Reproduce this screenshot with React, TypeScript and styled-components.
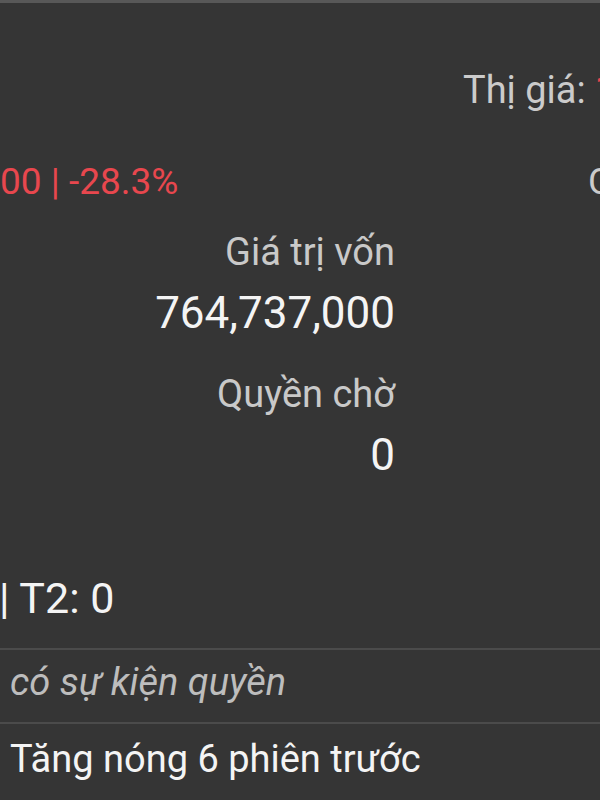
import styled, { createGlobalStyle } from 'styled-components';

const GlobalStyle = createGlobalStyle`
  html, body {
    margin: 0;
    padding: 0;
    background: #353535;
  }
  body {
    font-family: Roboto, 'Noto Sans', sans-serif;
  }
`;

const Screen = styled.div`
  width: 600px;
  height: 800px;
  overflow: hidden;
  background: #353535;
  border-top: 3px solid #585858;
  box-sizing: border-box;
  font-size: 38px;
  line-height: 1;
  white-space: nowrap;
`;

const PriceRow = styled.div`
  display: flex;
  padding: 68px 0 0 463px;
`;

const ChangeRow = styled.div`
  display: grid;
  grid-template-columns: 588px auto;
  margin-top: 54px;
  font-size: 37px;
`;

const Label = styled.span`
  color: #cbcbcb;
`;

const Loss = styled.span<{ $gap?: number }>`
  color: #e8474e;
  margin-left: ${(p) => p.$gap ?? 0}px;
`;

const Stats = styled.div`
  width: 395px;
  margin-top: 33px;
  display: flex;
  flex-direction: column;
  align-items: flex-end;
`;

const StatLabel = styled.div<{ $top: number }>`
  color: #c9c9c9;
  margin-top: ${(p) => p.$top}px;
`;

const StatValue = styled.div`
  color: #f4f4f4;
  font-size: 44px;
  margin-top: 20px;
`;

const Settle = styled.div`
  color: #f4f4f4;
  font-size: 43px;
  margin: 100px 0 0 -1px;
  padding-bottom: 28px;
`;

const Item = styled.div<{ $italic?: boolean }>`
  border-top: 2px solid #4b4b4b;
  padding: ${(p) => (p.$italic ? '13px 0 21px 10px' : '16px 0 20px 10px')};
  color: ${(p) => (p.$italic ? '#bdbdbd' : '#f4f4f4')};
  font-style: ${(p) => (p.$italic ? 'italic' : 'normal')};
`;

export default function App() {
  return (
    <>
      <GlobalStyle />
      <Screen>
        <PriceRow>
          <Label>Thị giá:</Label>
          <Loss $gap={9}>13,850</Loss>
        </PriceRow>
        <ChangeRow>
          <Loss>00 | -28.3%</Loss>
          <Label>Cổ tức</Label>
        </ChangeRow>
        <Stats>
          <StatLabel $top={0}>Giá trị vốn</StatLabel>
          <StatValue>764,737,000</StatValue>
          <StatLabel $top={40}>Quyền chờ</StatLabel>
          <StatValue>0</StatValue>
        </Stats>
        <Settle>| T2: 0</Settle>
        <Item $italic>có sự kiện quyền</Item>
        <Item>Tăng nóng 6 phiên trước</Item>
      </Screen>
    </>
  );
}
